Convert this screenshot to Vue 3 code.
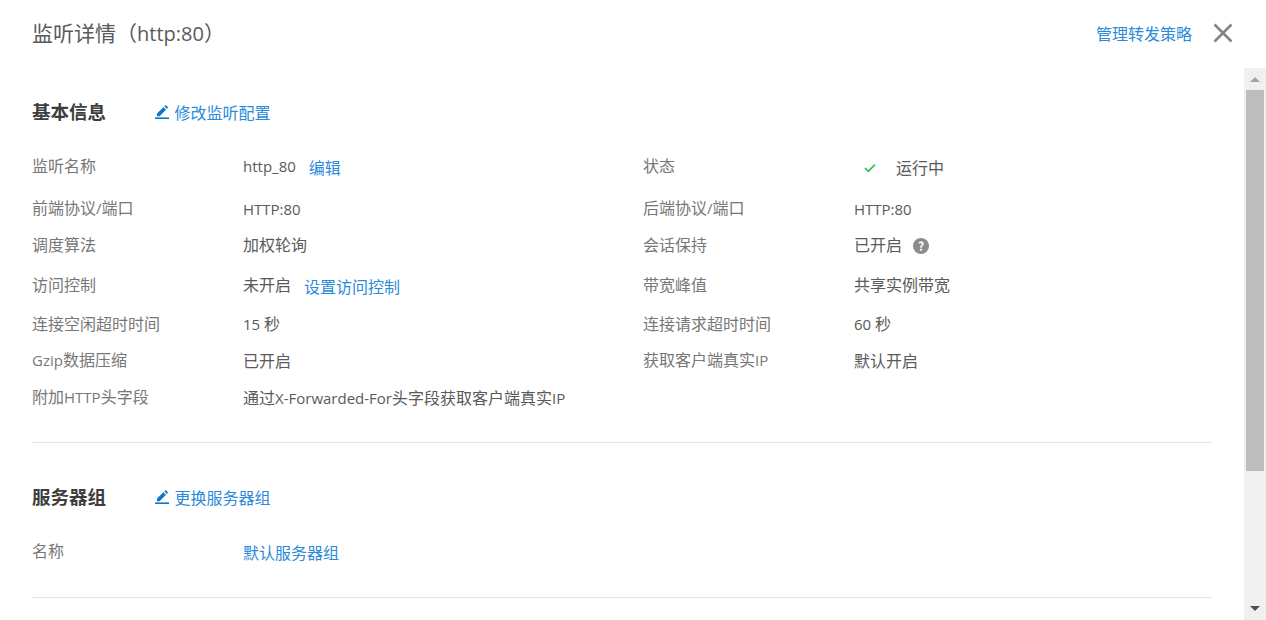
<script setup>
const rows = [
  { h: 52, cells: [{ k: '监听名称', v: 'http_80', link: '编辑', gap: 13 }, { k: '状态', status: '运行中' }] },
  { h: 33, cells: [{ k: '前端协议/端口', v: 'HTTP:80' }, { k: '后端协议/端口', v: 'HTTP:80' }] },
  { h: 39, cells: [{ k: '调度算法', v: '加权轮询' }, { k: '会话保持', v: '已开启', help: true }] },
  { h: 41, cells: [{ k: '访问控制', v: '未开启', link: '设置访问控制', gap: 13 }, { k: '带宽峰值', v: '共享实例带宽' }] },
  { h: 37, cells: [{ k: '连接空闲超时时间', v: '15 秒' }, { k: '连接请求超时时间', v: '60 秒' }] },
  { h: 37, cells: [{ k: 'Gzip数据压缩', v: '已开启' }, { k: '获取客户端真实IP', v: '默认开启' }] },
  { h: 37, cells: [{ k: '附加HTTP头字段', v: '通过X-Forwarded-For头字段获取客户端真实IP' }, {}] }
]

const runs = (text = '') =>
  (text.match(/[\x00-\x7F]+|[^\x00-\x7F]+/g) || []).map((t) => ({
    t,
    lat: /^[\x00-\x7F]/.test(t)
  }))
</script>

<template>
  <div class="drawer">
    <header class="head">
      <h1 class="title">监听详情（<span class="lat">http:80</span>）</h1>
      <div class="head-right">
        <a class="link">管理转发策略</a>
        <svg class="close" width="20" height="20" viewBox="0 0 20 20">
          <path d="M1.5 1.5 L18.5 18.5 M18.5 1.5 L1.5 18.5" stroke="#858585" stroke-width="2.6" fill="none" />
        </svg>
      </div>
    </header>
    <div class="body">
      <main class="content">
        <section class="section first">
          <div class="sec-head">
            <h2 class="sec-title">基本信息</h2>
            <a class="link action">
              <svg width="14" height="14" viewBox="0 0 14 14">
                <path d="M2 8.6 L8.4 2.2 L11 4.8 L4.6 11.2 L2 11.2 Z M9.3 1.3 L10.2.5 Q10.7.1 11.2.5 L12.7 2 Q13.1 2.5 12.7 3 L11.9 3.9 Z" fill="#0b76cf" />
                <rect x="0" y="12.4" width="14" height="1.6" fill="#0b76cf" />
              </svg>
              修改监听配置
            </a>
          </div>
          <div class="rows">
            <div v-for="(row, i) in rows" :key="i" class="row" :style="{ height: row.h + 'px' }">
              <div v-for="(c, j) in row.cells" :key="j" class="cell">
                <span class="key">
                  <span v-for="(r, n) in runs(c.k)" :key="n" :class="{ lat: r.lat }">{{ r.t }}</span>
                </span>
                <span v-if="c.status" class="val status">
                  <svg width="12" height="10" viewBox="0 0 12 10">
                    <path d="M1 5 L4.3 8.3 L11 1.6" stroke="#27c24c" stroke-width="1.6" fill="none" />
                  </svg>
                  <span>{{ c.status }}</span>
                </span>
                <span v-else-if="c.v" class="val">
                  <span v-for="(r, n) in runs(c.v)" :key="n" :class="{ lat: r.lat }">{{ r.t }}</span>
                  <a v-if="c.link" class="link inline" :style="{ marginLeft: c.gap + 'px' }">{{ c.link }}</a>
                  <span v-if="c.help" class="help">?</span>
                </span>
              </div>
            </div>
          </div>
        </section>
        <section class="section second">
          <div class="sec-head">
            <h2 class="sec-title">服务器组</h2>
            <a class="link action">
              <svg width="14" height="14" viewBox="0 0 14 14">
                <path d="M2 8.6 L8.4 2.2 L11 4.8 L4.6 11.2 L2 11.2 Z M9.3 1.3 L10.2.5 Q10.7.1 11.2.5 L12.7 2 Q13.1 2.5 12.7 3 L11.9 3.9 Z" fill="#0b76cf" />
                <rect x="0" y="12.4" width="14" height="1.6" fill="#0b76cf" />
              </svg>
              更换服务器组
            </a>
          </div>
          <div class="row group-row">
            <div class="cell">
              <span class="key">名称</span>
              <a class="link group-link">默认服务器组</a>
            </div>
          </div>
        </section>
      </main>
      <aside class="scrollbar">
        <span class="arrow up"></span>
        <div class="track"><div class="thumb"></div></div>
        <span class="arrow down"></span>
      </aside>
    </div>
  </div>
</template>

<style>
html, body { margin: 0; background: #fff; overflow: hidden; }
</style>

<style scoped>
.drawer {
  width: 1266px;
  height: 620px;
  overflow: hidden;
  background: #fff;
  color: #4a4a4a;
  font-family: "Noto Sans CJK SC", sans-serif;
  font-size: 16px;
  display: flex;
  flex-direction: column;
}
.lat { font-family: "Open Sans", sans-serif; font-size: 15px; }
.title .lat { font-size: 20px; }
.val .lat { margin-top: 2px; }
.head {
  height: 68px;
  flex: none;
  display: flex;
  align-items: flex-start;
  justify-content: space-between;
  padding: 0 33px 0 32px;
  box-sizing: border-box;
}
.title {
  margin: 18px 0 0;
  font-size: 21px;
  line-height: 28px;
  font-weight: 400;
  color: #5a5a5a;
}
.head-right {
  display: flex;
  align-items: center;
  margin-top: 23px;
  height: 20px;
}
.close { margin-left: 21px; }
.link { color: #2b8ad9; text-decoration: none; }
.body { flex: 1; display: flex; min-height: 0; }
.content {
  flex: 1;
  min-width: 0;
  padding: 0 32px;
  box-sizing: border-box;
}
.section { border-bottom: 1px solid #e3e3e3; width: 1180px; }
.first { height: 375px; padding-top: 29px; box-sizing: border-box; }
.second { height: 155px; padding-top: 39px; box-sizing: border-box; }
.sec-head { display: flex; align-items: center; height: 30px; }
.sec-title {
  margin: 0 0 3px;
  width: 123px;
  font-size: 18.5px;
  font-weight: 700;
  color: #3d3d3d;
}
.action { display: flex; align-items: center; gap: 5.5px; }
.rows { margin-top: 12px; }
.row { display: grid; grid-template-columns: 611px 1fr; align-items: center; }
.cell { display: flex; align-items: center; line-height: 22px; }
.key { width: 211px; flex: none; color: #777; white-space: pre; }
.val { color: #5a5a5a; display: flex; align-items: center; white-space: pre; }
.inline { position: relative; top: 2px; }
.status svg { margin: 6px 20px 0 10px; }
.status span { position: relative; top: 2px; }
.help {
  width: 16px;
  height: 16px;
  margin: 4px 0 0 11px;
  border-radius: 50%;
  background: #8c8c8c;
  color: #fff;
  font-size: 12px;
  font-weight: 700;
  line-height: 16px;
  text-align: center;
}
.group-row { display: block; margin-top: 27px; }
.group-link { position: relative; top: 2px; }
.scrollbar {
  width: 22px;
  flex: none;
  height: 552px;
  background: #f0f0f0;
  display: flex;
  flex-direction: column;
  align-items: center;
}
.arrow { width: 0; height: 0; border-left: 5px solid transparent; border-right: 5px solid transparent; }
.up { border-bottom: 5px solid #a3a3a3; margin: 9px 0 8px; }
.down { border-top: 5px solid #505050; margin: 8px 0 9px; }
.track { flex: 1; width: 18px; }
.thumb { height: 381px; background: #bdbdbd; }
</style>
